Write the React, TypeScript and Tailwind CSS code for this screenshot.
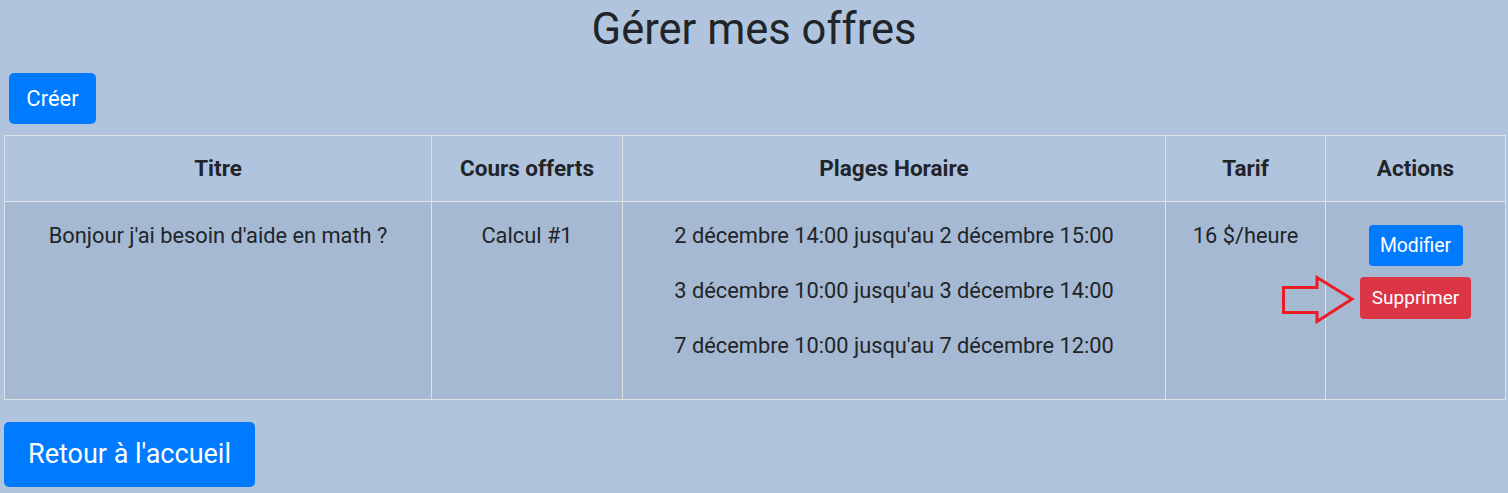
import React from 'react';

const slots = [
  "2 décembre 14:00 jusqu'au 2 décembre 15:00",
  "3 décembre 10:00 jusqu'au 3 décembre 14:00",
  "7 décembre 10:00 jusqu'au 7 décembre 12:00",
];

const App: React.FC = () => {
  return (
    <div className="min-h-[493px] bg-[#b0c4de] px-[4px] text-[#212529] font-['Roboto',sans-serif]">
      <h1 className="pt-[4px] text-center text-[43.5px] leading-[52px] font-normal">Gérer mes offres</h1>

      <div className="mt-[17px] pl-[5px]">
        <button className="h-[51px] w-[87px] rounded-[5px] bg-[#007bff] text-[22px] text-white">Créer</button>
      </div>

      <table className="mt-[11px] w-full table-fixed border-collapse text-[21.8px]">
        <colgroup>
          <col className="w-[427px]" />
          <col className="w-[191px]" />
          <col className="w-[543px]" />
          <col className="w-[160px]" />
          <col className="w-[180px]" />
        </colgroup>
        <thead>
          <tr className="h-[66px]">
            {['Titre', 'Cours offerts', 'Plages Horaire', 'Tarif', 'Actions'].map((h) => (
              <th key={h} className="border border-[#dee2e6] text-center font-bold text-[22.5px]">{h}</th>
            ))}
          </tr>
        </thead>
        <tbody>
          <tr className="bg-[#a5b9d3] align-top">
            <td className="border border-[#dee2e6] pt-[19px] text-center leading-[30px]">Bonjour j'ai besoin d'aide en math ?</td>
            <td className="border border-[#dee2e6] pt-[19px] text-center leading-[30px]">Calcul #1</td>
            <td className="border border-[#dee2e6] pt-[19px] pb-[13px] text-center leading-[30px]">
              {slots.map((s) => (
                <p key={s} className="mb-[25px]">{s}</p>
              ))}
            </td>
            <td className="border border-[#dee2e6] pt-[19px] text-center leading-[30px]">16 $/heure</td>
            <td className="border border-[#dee2e6] pt-[23px]">
              <div className="flex flex-col items-center gap-[11px]">
                <button className="h-[41px] w-[94px] rounded-[4px] bg-[#007bff] text-[19.4px] text-white">Modifier</button>
                <button className="h-[42px] w-[111px] rounded-[4px] bg-[#dc3545] text-[19px] text-white">Supprimer</button>
              </div>
            </td>
          </tr>
        </tbody>
      </table>

      <svg className="absolute left-[1280px] top-[275px]" width="76" height="50" viewBox="0 0 76 50">
        <path
          d="M3.5 12.5 H37 V2.5 L72 24 L37 46.5 V37.5 H3.5 Z"
          fill="none"
          stroke="#ed1c24"
          strokeWidth="3"
          strokeLinejoin="miter"
        />
      </svg>

      <div className="mt-[22px]">
        <button className="h-[65px] w-[251px] rounded-[5px] bg-[#007bff] text-[27px] text-white">Retour à l'accueil</button>
      </div>
    </div>
  );
};

export default App;
